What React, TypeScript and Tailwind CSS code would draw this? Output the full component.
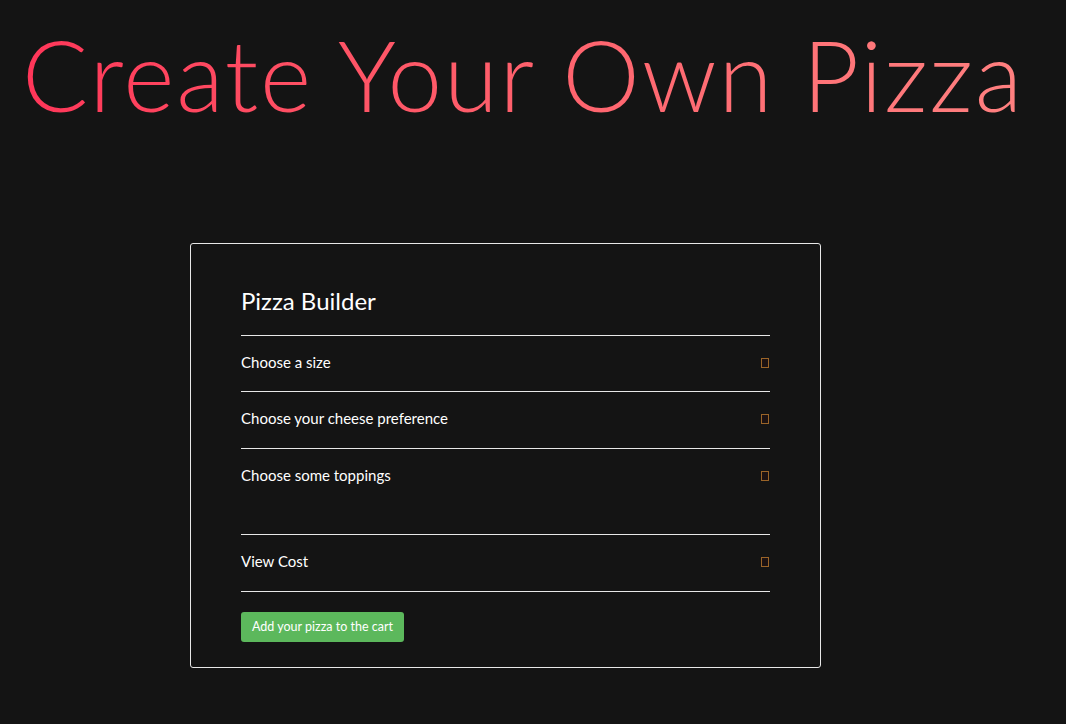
import React from 'react';

// missing-glyph box the page shows in place of the caret icon
const Caret = () => (
  <span className="block w-[8px] h-[10px] border border-[#9a6428] bg-[#1c1212]" />
);

const App: React.FC = () => {
  const rows = [
    { label: 'Choose a size', h: 'h-[56px]' },
    { label: 'Choose your cheese preference', h: 'h-[57px]' },
    { label: 'Choose some toppings', h: 'h-[86px]' },
    { label: 'View Cost', h: 'h-[57px]' },
  ];

  return (
    <div className="min-h-screen bg-[#141414] font-['Lato','Open_Sans',sans-serif] text-white">
      {/* Titel */}
      <h1 className="pl-[22px] pt-[16px] text-[98px] leading-[116px] font-light tracking-[1.8px] bg-gradient-to-r from-[#ff3358] to-[#ff8080] bg-clip-text text-transparent w-fit">
        Create Your Own Pizza
      </h1>

      <div className="pt-[111px] pl-[190px]">
        <div className="w-[631px] border border-[#e8e8e8] rounded-[3px] px-[50px] pt-[40px] pb-[25px]">
          <h2 className="text-[24px] leading-[34px] mb-[17px]">Pizza Builder</h2>
          <div className="border-t border-[#e8e8e8]">
            {rows.map((row) => (
              <div key={row.label} className={`${row.h} border-b border-[#e8e8e8] flex justify-between items-start pt-[16px]`}>
                <span className="text-[15px] leading-[20px]">{row.label}</span>
                <span className="mt-[6px] mr-[1px]"><Caret /></span>
              </div>
            ))}
          </div>
          <button className="mt-[20px] h-[30px] px-[11px] bg-[#5cb85c] rounded-[3px] text-[12.5px] text-white">
            Add your pizza to the cart
          </button>
        </div>
      </div>
    </div>
  );
};

export default App;
